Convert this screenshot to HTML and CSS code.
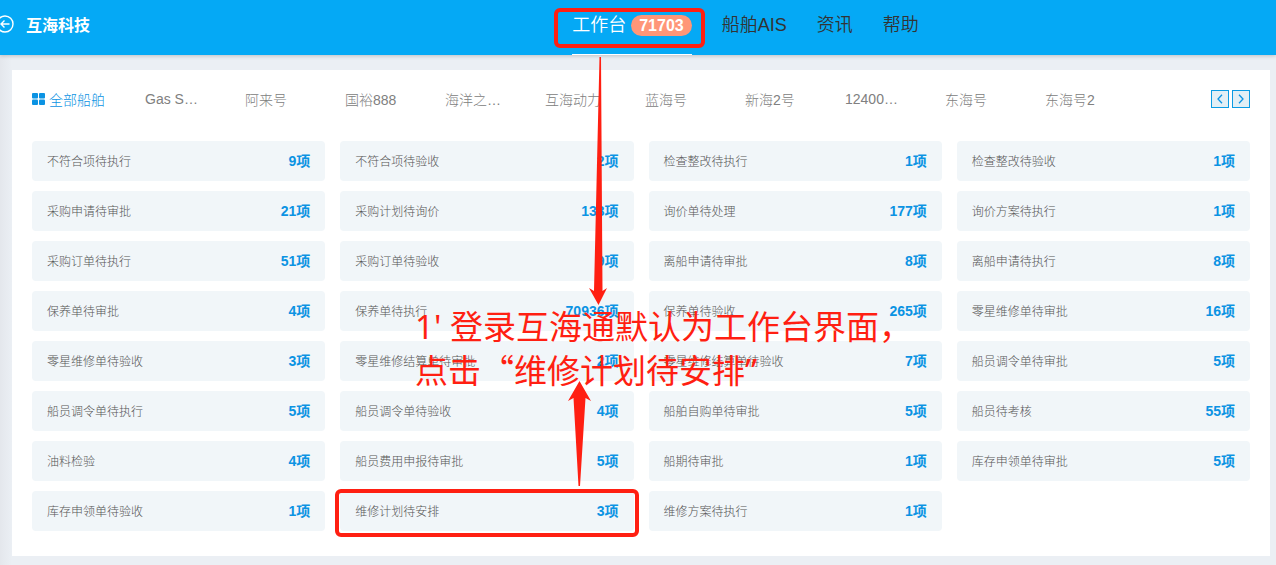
FILE: index.html
```html
<!DOCTYPE html>
<html lang="zh-CN">
<head>
<meta charset="utf-8">
<title>互海科技</title>
<meta name="viewport" content="width=device-width, initial-scale=1">
<link rel="stylesheet" href="styles.css">
</head>
<body>
<header class="topbar">
  <div class="brand">
    <button class="back" type="button" aria-label="返回"><svg width="18" height="18" viewBox="0 0 18 18" fill="none" stroke="currentColor" stroke-width="1.4"><circle cx="9" cy="9" r="8"/><path d="M13.500 9H5M8.500 5.500 5 9l3.500 3.500"/></svg></button>
    <span class="company">互海科技</span>
  </div>
  <nav class="nav">
    <a class="nav-link active marked" href="#">工作台 <span class="badge">71703</span></a>
    <a class="nav-link" href="#">船舶AIS</a>
    <a class="nav-link" href="#">资讯</a>
    <a class="nav-link" href="#">帮助</a>
  </nav>
</header>
<main class="panel">
  <div class="ships">
    <a class="ship all" href="#"><svg width="13" height="12" viewBox="0 0 13 12" fill="currentColor"><rect width="6" height="5.500" rx="1"/><rect x="7" width="6" height="5.500" rx="1"/><rect y="6.500" width="6" height="5.500" rx="1"/><rect x="7" y="6.500" width="6" height="5.500" rx="1"/></svg>全部船舶</a>
    <a class="ship" href="#">Gas S…</a>
    <a class="ship" href="#">阿来号</a>
    <a class="ship" href="#">国裕888</a>
    <a class="ship" href="#">海洋之…</a>
    <a class="ship" href="#">互海动力</a>
    <a class="ship" href="#">蓝海号</a>
    <a class="ship" href="#">新海2号</a>
    <a class="ship" href="#">12400…</a>
    <a class="ship" href="#">东海号</a>
    <a class="ship" href="#">东海号2</a>
    <div class="pager">
      <button class="page" type="button" aria-label="上一页"><svg width="8" height="10" viewBox="0 0 8 10" fill="none" stroke="currentColor" stroke-width="1.300"><path d="M6 .8 2 5l4 4.200"/></svg></button>
      <button class="page" type="button" aria-label="下一页"><svg width="8" height="10" viewBox="0 0 8 10" fill="none" stroke="currentColor" stroke-width="1.300"><path d="M2 .8 6 5 2 9.200"/></svg></button>
    </div>
  </div>
  <div class="tasks">
    <a class="task" href="#"><span>不符合项待执行</span><b>9项</b></a>
    <a class="task" href="#"><span>不符合项待验收</span><b>2项</b></a>
    <a class="task" href="#"><span>检查整改待执行</span><b>1项</b></a>
    <a class="task" href="#"><span>检查整改待验收</span><b>1项</b></a>
    <a class="task" href="#"><span>采购申请待审批</span><b>21项</b></a>
    <a class="task" href="#"><span>采购计划待询价</span><b>133项</b></a>
    <a class="task" href="#"><span>询价单待处理</span><b>177项</b></a>
    <a class="task" href="#"><span>询价方案待执行</span><b>1项</b></a>
    <a class="task" href="#"><span>采购订单待执行</span><b>51项</b></a>
    <a class="task" href="#"><span>采购订单待验收</span><b>9项</b></a>
    <a class="task" href="#"><span>离船申请待审批</span><b>8项</b></a>
    <a class="task" href="#"><span>离船申请待执行</span><b>8项</b></a>
    <a class="task" href="#"><span>保养单待审批</span><b>4项</b></a>
    <a class="task" href="#"><span>保养单待执行</span><b>70936项</b></a>
    <a class="task" href="#"><span>保养单待验收</span><b>265项</b></a>
    <a class="task" href="#"><span>零星维修单待审批</span><b>16项</b></a>
    <a class="task" href="#"><span>零星维修单待验收</span><b>3项</b></a>
    <a class="task" href="#"><span>零星维修结算单待审批</span><b>2项</b></a>
    <a class="task" href="#"><span>零星维修结算单待验收</span><b>7项</b></a>
    <a class="task" href="#"><span>船员调令单待审批</span><b>5项</b></a>
    <a class="task" href="#"><span>船员调令单待执行</span><b>5项</b></a>
    <a class="task" href="#"><span>船员调令单待验收</span><b>4项</b></a>
    <a class="task" href="#"><span>船舶自购单待审批</span><b>5项</b></a>
    <a class="task" href="#"><span>船员待考核</span><b>55项</b></a>
    <a class="task" href="#"><span>油料检验</span><b>4项</b></a>
    <a class="task" href="#"><span>船员费用申报待审批</span><b>5项</b></a>
    <a class="task" href="#"><span>船期待审批</span><b>1项</b></a>
    <a class="task" href="#"><span>库存申领单待审批</span><b>5项</b></a>
    <a class="task" href="#"><span>库存申领单待验收</span><b>1项</b></a>
    <a class="task marked" href="#"><span>维修计划待安排</span><b>3项</b></a>
    <a class="task" href="#"><span>维修方案待执行</span><b>1项</b></a>
  </div>
</main>
<svg class="arrows" width="640" height="500" viewBox="0 0 640 500" fill="currentColor" aria-hidden="true">
  <path d="M599.500 57h1.500L602.500 291 607 288 598.500 305 589 288 594 291Z"/>
  <path d="M578.500 486h1.500L585.500 398 591 401 579.500 381 568 401 573.500 398Z"/>
</svg>
<p class="note"><span class="latin">1' </span>登录互海通默认为工作台界面，<br>点击“维修计划待安排<span class="latin">”</span></p>
</body>
</html>
```
FILE: styles.css
```css
* {
  box-sizing: border-box;
}

body {
  position: relative;
  margin: 0;
  padding-bottom: 9px;
  background: linear-gradient(90deg, #e4e7ec, #ebeff4 12px);
  color: #555;
  font-family: "Liberation Sans", "Noto Sans CJK SC", sans-serif;
  font-size: 14px;
  font-weight: 300;
}

a {
  color: inherit;
  text-decoration: none;
}

button {
  display: flex;
  align-items: center;
  justify-content: center;
  padding: 0;
  cursor: pointer;
}

svg {
  flex: none;
}

.topbar {
  display: flex;
  height: 55px;
  background: #05a9f5;
  box-shadow: 0 1px 4px rgba(0, 0, 0, 0.2);
}

.brand {
  display: flex;
  flex: 0 0 45%;
  align-items: center;
  gap: 12px;
  height: 47px;
  margin: 0 2px 0 -4px;
  color: #fff;
}

.back {
  border: 0;
  background: none;
  color: inherit;
}

.company {
  font-size: 16px;
  font-weight: 700;
}

.nav {
  display: flex;
  gap: 30px;
  color: #333;
  font-size: 18px;
  font-weight: 350;
  line-height: 50px;
  white-space: nowrap;
}

.nav-link {
  position: relative;
}

.nav-link.active {
  display: flex;
  align-items: center;
  gap: 5px;
  height: 55px;
  padding-bottom: 4px;
  border-bottom: 1px solid #fff;
  color: #fff;
}

.badge {
  padding: 0 8px;
  border-radius: 11px;
  background: #ff9678;
  font-size: 16px;
  font-weight: 700;
  line-height: 21px;
}

.panel {
  margin: 15px 6px 0 12px;
  padding: 14px 20px 25px;
  background: #fff;
}

.ships {
  display: flex;
  align-items: center;
  height: 30px;
  margin-bottom: 27px;
  color: #808080;
}

.ship {
  flex: 0 0 100px;
  white-space: nowrap;
}

.ship.all {
  display: flex;
  flex-basis: 113px;
  align-items: center;
  gap: 4px;
  color: #0b93e3;
}

.pager {
  display: flex;
  gap: 3px;
  margin-left: auto;
}

.page {
  width: 18px;
  height: 18px;
  border: 1px solid #0b9be3;
  background: #e2eff5;
  color: #0b93e3;
}

.tasks {
  display: grid;
  grid-template-columns: repeat(4, 1fr);
  gap: 10px 15px;
}

.task {
  position: relative;
  display: flex;
  align-items: center;
  justify-content: space-between;
  height: 40px;
  padding: 0 15px 2px;
  border-radius: 4px;
  background: #f1f6f9;
  font-size: 12px;
}

.task b {
  color: #0b93e3;
  font-size: 14px;
  font-weight: 700;
}

.marked::after {
  content: "";
  position: absolute;
  z-index: 1;
  border: 4px solid #ff1f12;
  border-radius: 6px;
}

.nav-link.marked::after {
  inset: 8px -13px 6px -18px;
}

.task.marked::after {
  inset: -2px -5px -6px;
}

.arrows {
  position: absolute;
  top: 0;
  left: 0;
  color: #ff1f12;
  pointer-events: none;
}

.note {
  position: absolute;
  top: 304px;
  left: 415px;
  margin: 0;
  color: #ff1f12;
  font-family: "Noto Sans CJK SC", sans-serif;
  font-size: 33px;
  font-weight: 400;
  line-height: 43px;
  white-space: nowrap;
  pointer-events: none;
}

.latin {
  font-family: "Noto Sans", sans-serif;
}
```
